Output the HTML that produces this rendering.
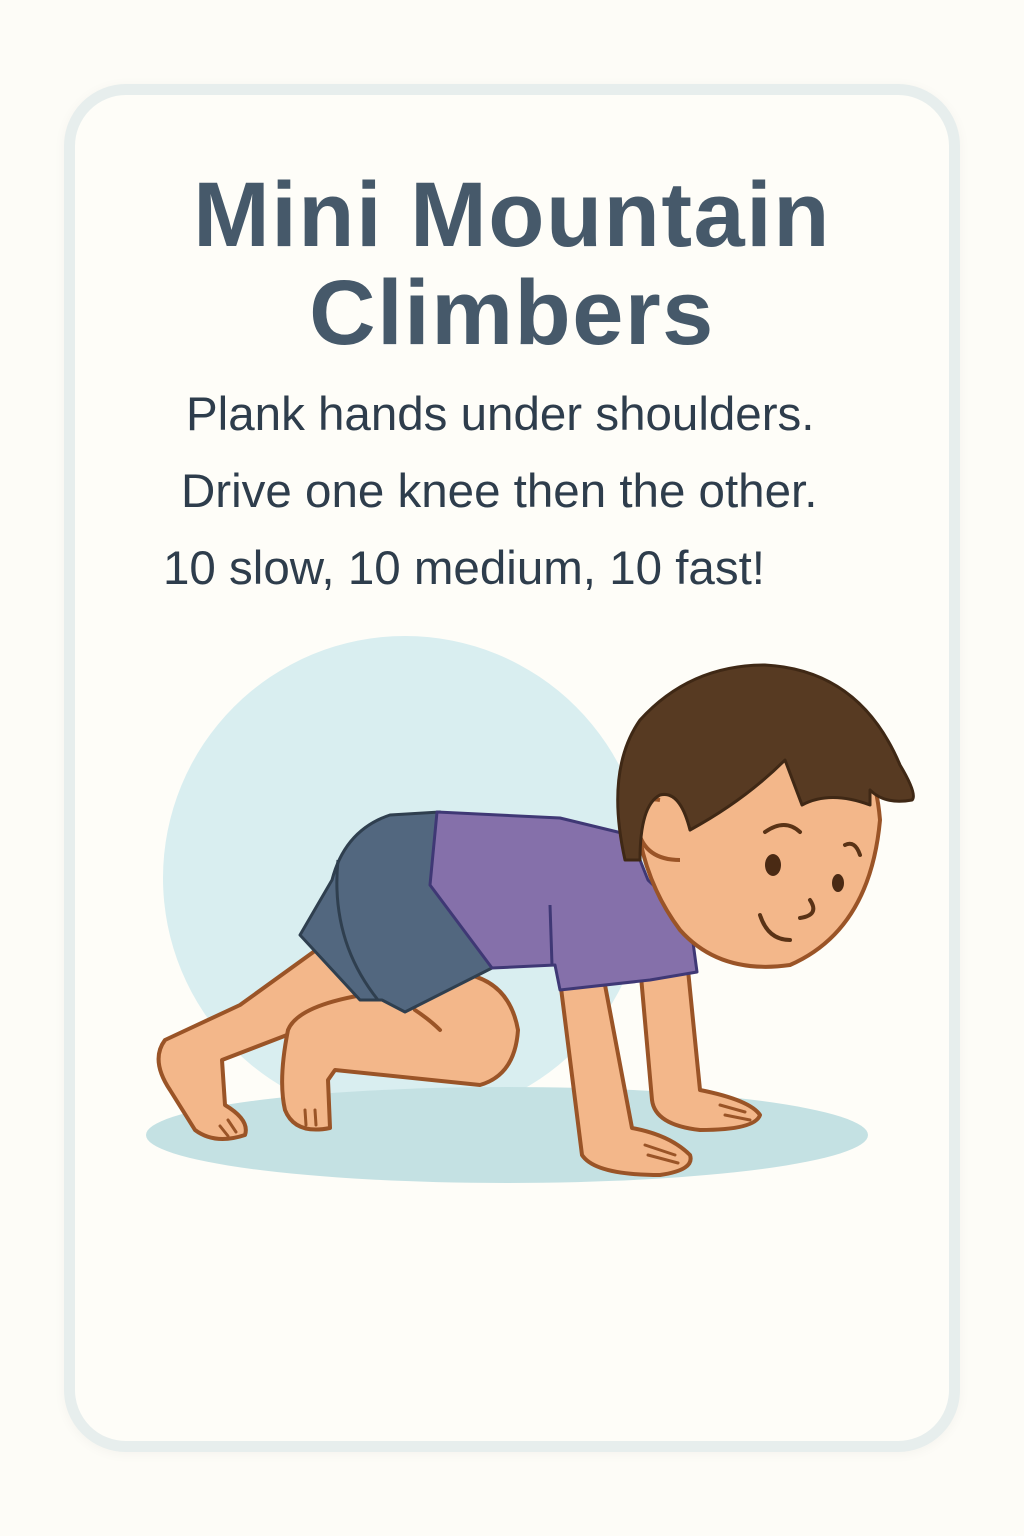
<!DOCTYPE html>
<html><head><meta charset="utf-8"><style>
html,body{margin:0;padding:0;background:#fdfcf7;}
body{width:1024px;height:1536px;position:relative;overflow:hidden;font-family:"Liberation Sans",sans-serif;}
.card{position:absolute;left:64px;top:84px;width:874px;height:1346px;border:11px solid #e7eeed;border-radius:62px;background:#fefdf8;box-shadow:0 2px 12px rgba(0,0,0,0.04);}
h1{position:absolute;left:0;width:1024px;top:166px;margin:0;text-align:center;font-size:92px;line-height:98px;font-weight:bold;color:#46596a;letter-spacing:1.5px;}
.t{position:absolute;font-size:47.5px;color:#2e3d4c;white-space:nowrap;}
svg{position:absolute;left:0;top:0;}
</style></head><body>
<div class="card"></div>
<h1>Mini Mountain<br>Climbers</h1>
<div class="t" style="left:186px;top:387px;">Plank hands under shoulders.</div>
<div class="t" style="left:181px;top:464px;">Drive one knee then the other.</div>
<div class="t" style="left:163px;top:541px;">10 slow, 10 medium, 10 fast!</div>
<svg width="1024" height="1536" viewBox="0 0 1024 1536">
<circle cx="405" cy="878" r="242" fill="#d9eef0"/>
<ellipse cx="507" cy="1135" rx="361" ry="48" fill="#c4e1e3"/>
<g stroke="#9a5427" stroke-width="4" stroke-linejoin="round" stroke-linecap="round" fill="#f3b78a">
<path d="M330 940 L240 1005 L165 1040 Q150 1060 170 1090 L195 1130 Q215 1145 245 1135 Q250 1120 225 1105 L222 1060 L300 1030 L360 995 Z"/>
<path d="M400 990 Q300 1000 288 1030 Q278 1080 285 1110 Q295 1135 330 1128 L328 1080 L335 1070 L480 1085 Q515 1075 518 1030 Q510 985 470 975 Z"/>
<path d="M415 1010 Q430 1020 440 1030" fill="none"/>
<path d="M640 965 L652 1100 Q655 1125 700 1130 Q755 1130 760 1115 Q750 1100 700 1090 L688 970 Z"/>
<path d="M560 980 L582 1155 Q595 1175 660 1175 Q695 1170 690 1155 Q670 1135 632 1128 L605 985 Z"/>
</g>
<g stroke="#9a5427" stroke-width="3" fill="none" stroke-linecap="round">
<path d="M228 1120 L236 1132 M220 1126 L228 1136"/>
<path d="M305 1110 L306 1125 M315 1110 L316 1125"/>
<path d="M720 1105 L745 1112 M725 1115 L750 1120"/>
<path d="M645 1145 L675 1155 M648 1155 L678 1163"/>
</g>
<path d="M300 935 L332 880 Q345 830 390 815 L440 812 L492 968 L405 1012 L382 1000 L360 1000 Z" fill="#52677f" stroke="#2f3f4f" stroke-width="3" stroke-linejoin="round"/>
<path d="M338 860 Q330 940 378 1000" fill="none" stroke="#2f3f4f" stroke-width="3"/>
<path d="M437 812 L560 818 L630 835 L648 880 L690 920 L697 972 L650 980 L560 990 L555 965 L492 968 L430 885 Z" fill="#8570aa" stroke="#3f3875" stroke-width="3" stroke-linejoin="round"/>
<path d="M550 905 L552 965" stroke="#3f3875" stroke-width="3" fill="none"/>
<path d="M640 790 Q640 700 760 690 Q870 700 880 820 Q870 930 790 965 Q720 975 680 930 Q650 890 640 840 Z" fill="#f3b78a" stroke="#9a5427" stroke-width="4"/>
<path d="M660 800 Q630 795 638 830 Q645 860 680 860" fill="#f3b78a" stroke="#9a5427" stroke-width="4"/>
<path d="M625 860 Q605 770 640 720 Q690 665 765 665 Q860 670 900 765 Q918 795 912 800 Q885 805 870 790 L870 805 Q830 790 802 805 L785 760 Q745 800 690 830 Q680 790 660 795 Q640 805 640 860 Z" fill="#573a22" stroke="#3f2815" stroke-width="3" stroke-linejoin="round"/>
<g stroke="#5a3316" stroke-width="4" fill="none" stroke-linecap="round">
<path d="M765 832 Q785 818 800 832"/>
<path d="M845 845 Q855 840 860 855"/>
<path d="M810 900 Q820 915 800 918"/>
<path d="M760 915 Q768 940 790 940"/>
</g>
<ellipse cx="773" cy="865" rx="8" ry="11" fill="#4a2a14"/>
<ellipse cx="838" cy="883" rx="6" ry="9" fill="#4a2a14"/>
</svg>
</body></html>
